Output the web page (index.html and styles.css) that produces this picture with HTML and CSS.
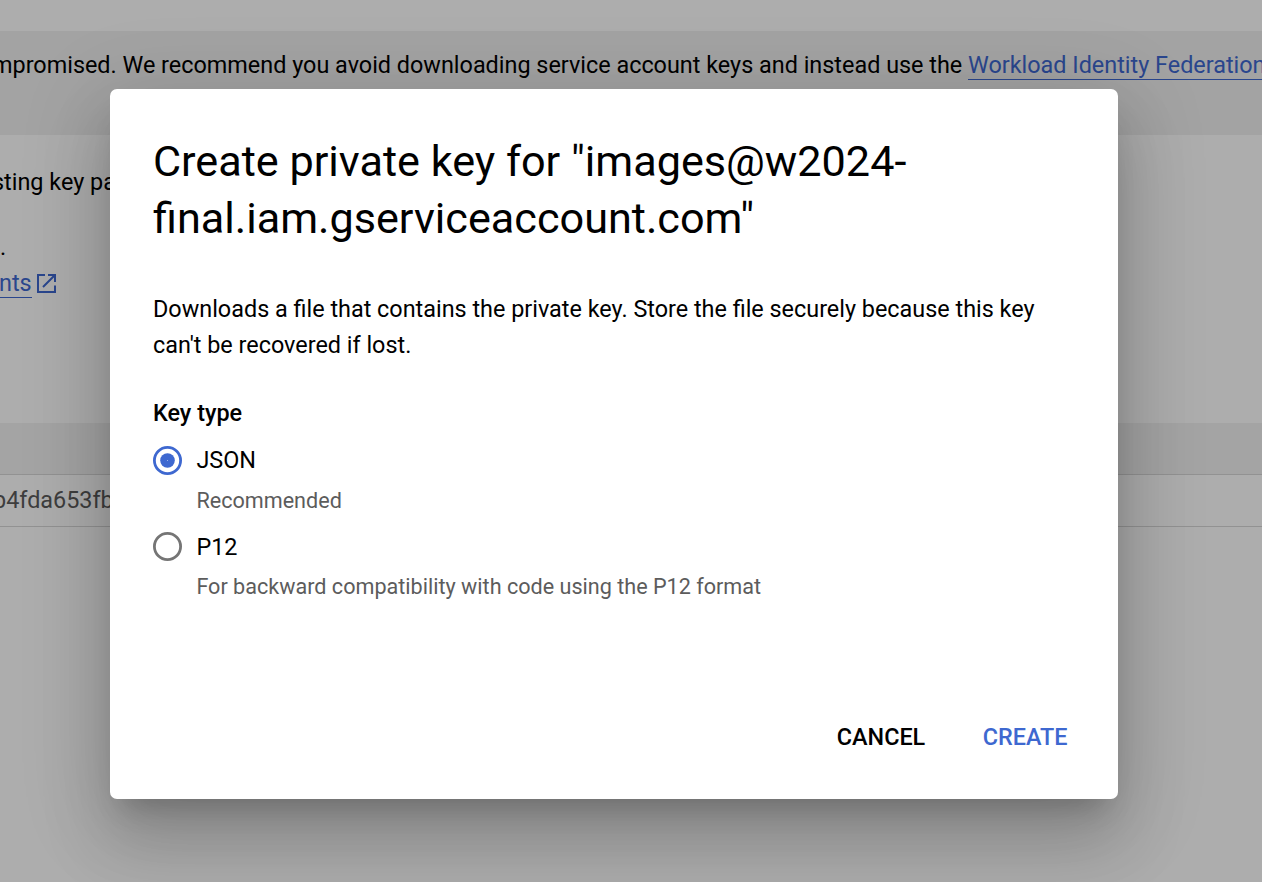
FILE: index.html
```html
<!DOCTYPE html>
<html lang="en">
<head>
<meta charset="utf-8">
<title>Create private key</title>
<link rel="stylesheet" href="styles.css">
</head>
<body>
<main class="page">
  <section class="notice"><p class="notice-text">mpromised. We recommend you avoid downloading service account keys and instead use the <a class="link">Workload Identity Federation</a></p></section>
  <section class="details">
    <p class="detail-line key-pair">sting key pa</p>
    <p class="detail-line period">.</p>
    <p class="detail-line docs"><a class="link">nts</a><svg class="external" viewBox="0 0 19 19" fill="none" stroke="currentColor" stroke-width="2"><path d="M8 1H1v17h17V11.5M11 1h7v7M17.7 1.3L6 13"/></svg></p>
  </section>
  <div class="table-head"></div>
  <div class="table-row"><span class="key-id">b4fda653fb</span></div>
</main>
<div class="backdrop">
  <div class="dialog" role="dialog" aria-labelledby="title">
    <h1 class="title" id="title">Create private key for "images@w2024-<br>final.iam.gserviceaccount.com"</h1>
    <p class="description">Downloads a file that contains the private key. Store the file securely because this key<br>can't be recovered if lost.</p>
    <h2 class="group-label">Key type</h2>
    <div class="options">
      <label class="option">
        <svg class="radio selected" viewBox="0 0 29 29"><circle cx="14.5" cy="14.5" r="13.1" fill="none" stroke="currentColor" stroke-width="2.8"/><circle cx="14.5" cy="14.5" r="7.3" fill="currentColor"/><circle class="pin" cx="14.5" cy="14.5" r=".45"/></svg>
        <span class="option-name">JSON</span>
        <span class="hint">Recommended</span>
      </label>
      <label class="option">
        <svg class="radio" viewBox="0 0 29 29"><circle cx="14.5" cy="14.5" r="13.1" fill="none" stroke="currentColor" stroke-width="2.8"/></svg>
        <span class="option-name lowered">P12</span>
        <span class="hint">For backward compatibility with code using the P12 format</span>
      </label>
    </div>
    <div class="actions"><button class="action">CANCEL</button><button class="action primary">CREATE</button></div>
  </div>
</div>
</body>
</html>
```
FILE: styles.css
```css
* { box-sizing: border-box; }
body { margin: 0; height: 882px; overflow: hidden; font-family: Roboto, "Liberation Sans", sans-serif; font-size: 23.4px; line-height: 36px; color: #000; }
p, h1, h2 { margin: 0; }
.page { height: 882px; padding-top: 31px; overflow: hidden; background: #fff; }
.notice { height: 104px; padding-top: 16px; background: #f1f1f1; }
.notice-text { margin-left: -8px; white-space: nowrap; }
.link { display: inline-block; height: 33px; border-bottom: 1px solid #3e68d0; color: #3e68d0; }
.details { height: 288px; padding-top: 29px; }
.detail-line { height: 36px; white-space: nowrap; }
.key-pair { margin: 0 0 29px -8px; }
.docs { display: flex; align-items: flex-start; gap: 5px; margin-left: -1px; color: #3e68d0; }
.external { width: 19px; height: 19px; margin-top: 9px; }
.table-head { height: 52px; background: #f2f2f2; border-bottom: 1px solid #d8d8d8; }
.table-row { height: 52px; line-height: 51px; border-bottom: 1px solid #d8d8d8; color: #5c5c5c; }
.key-id { margin-left: -7px; }
.backdrop { position: absolute; top: 0; left: 0; width: 1262px; height: 882px; padding: 89px 144px 83px 110px; overflow: hidden; background: rgba(0,0,0,.32); }
.dialog { display: flex; flex-direction: column; height: 710px; padding: 44px 43px; border-radius: 7px; background: #fff; box-shadow: 0 20px 27px -13px rgba(0,0,0,.2), 0 43px 68px 5px rgba(0,0,0,.14), 0 16px 83px 14px rgba(0,0,0,.12); }
.title { font-size: 43.2px; line-height: 57px; font-weight: 400; white-space: nowrap; }
.description { margin-top: 44px; white-space: nowrap; }
.group-label { margin-top: 32px; font-size: 23.4px; line-height: 36px; font-weight: 500; }
.options { display: flex; flex-direction: column; margin-top: 11px; }
.option { display: grid; grid-template-columns: 29px 1fr; column-gap: 14.4px; grid-template-rows: 36px 50px; }
.radio { width: 29px; height: 29px; margin-top: 4px; color: #757575; }
.selected { color: #3e68d0; }
.pin { fill: #fff; }
.lowered { padding-top: 1px; }
.hint { grid-column: 2; padding-top: 5px; font-size: 21.6px; color: #5c5c5c; }
.actions { display: flex; justify-content: flex-end; gap: 57.5px; margin-top: auto; padding-right: 7.5px; }
.action { height: 36px; padding: 0; border: 0; background: none; font: 500 23.4px/36px Roboto, sans-serif; color: #000; }
.primary { color: #3e68d0; }
```
